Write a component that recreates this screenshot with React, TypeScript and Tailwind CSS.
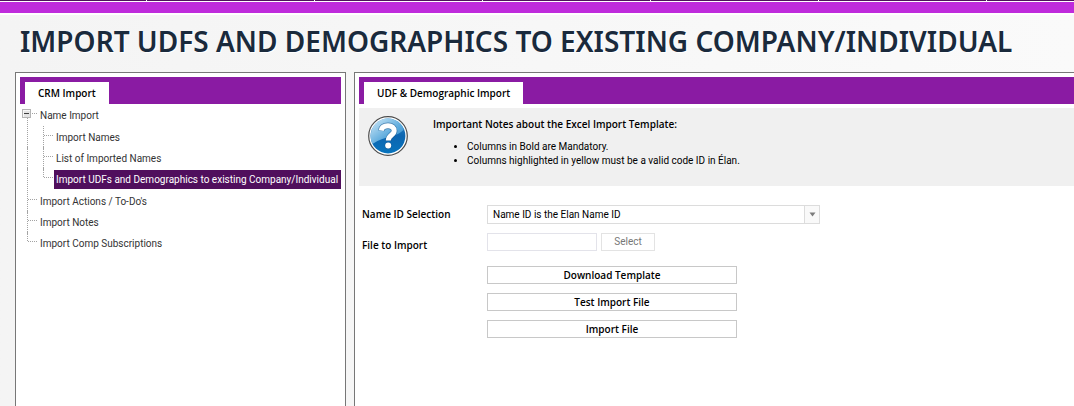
import { useState } from 'react';

type TreeItem = { label: string; depth: 0 | 1; last?: boolean; expander?: boolean };

const branches: TreeItem[][] = [
  [{ label: 'Name Import', depth: 0, expander: true }],
  [
    { label: 'Import Names', depth: 1 },
    { label: 'List of Imported Names', depth: 1 },
    { label: 'Import UDFs and Demographics to existing Company/Individual', depth: 1, last: true },
  ],
  [
    { label: "Import Actions / To-Do's", depth: 0 },
    { label: 'Import Notes', depth: 0 },
    { label: 'Import Comp Subscriptions', depth: 0, last: true },
  ],
];

function Connector({ item }: { item: TreeItem }) {
  const width = item.depth === 1 ? 32 : 16;
  const x = item.depth === 1 ? 21 : 5;
  return (
    <svg
      className="shrink-0 overflow-visible"
      width={width}
      height="21"
      viewBox={`0 0 ${width} 21`}
      fill="none"
      stroke="#a3a3a3"
      aria-hidden="true"
    >
      <g strokeDasharray="1 1">
        {item.depth === 1 && <path d="M5.5 -1V22" />}
        {item.expander ? (
          <path d="M5.5 13V22" />
        ) : (
          <path d={item.last ? `M${x}.5 -1V9` : `M${x}.5 -1V22`} />
        )}
        <path d={`M${x + 1} 8.5H${x + 10}`} />
      </g>
      {item.expander && (
        <g>
          <rect x="0.5" y="4.5" width="8" height="8" fill="#e4e4e4" stroke="#b4b4b4" />
          <path d="M1 5.5H8M1.5 5V12" stroke="#f8f8f8" />
          <path d="M2 8.5H7" stroke="#404040" />
        </g>
      )}
    </svg>
  );
}

function TabBar({ title }: { title: string }) {
  return (
    <div role="tablist" className="flex bg-[#8a1ba3] px-[5px] pt-[5px]">
      <button
        role="tab"
        aria-selected="true"
        type="button"
        className="h-[22px] bg-white px-[13px] font-['Open_Sans',sans-serif] text-[10px] leading-[22px] font-semibold text-black"
      >
        {title}
      </button>
    </div>
  );
}

function HelpIcon() {
  return (
    <svg className="shrink-0" width="40" height="40" viewBox="0 0 40 40" aria-hidden="true">
      <defs>
        <linearGradient id="ball" x1="0" y1="0" x2="0" y2="1">
          <stop offset="0" stopColor="#2a86c8" />
          <stop offset="0.5" stopColor="#0c65b0" />
          <stop offset="1" stopColor="#0874bd" />
        </linearGradient>
        <linearGradient id="shine" x1="0" y1="0" x2="1" y2="1">
          <stop offset="0" stopColor="#d4ebf8" />
          <stop offset="0.6" stopColor="#5aa9dc" />
          <stop offset="1" stopColor="#2984c6" />
        </linearGradient>
      </defs>
      <circle cx="20" cy="20" r="19.3" fill="#fff" stroke="#4c4c4c" strokeWidth="1.2" />
      <circle cx="20" cy="20" r="17.4" fill="url(#ball)" />
      <path d="M2.6 21.5A17.4 17.4 0 0 1 35.9 13C31 21 18 19 4.5 28A17.4 17.4 0 0 1 2.6 21.5Z" fill="url(#shine)" />
      <g fill="none" strokeLinecap="butt">
        <path d="M13.2 14.8C13.8 11 16.6 9.8 20 9.8C24 9.8 26.2 12 26.2 14.8C26.2 19.2 20.3 19 20.3 25" stroke="#17548a" strokeOpacity="0.6" strokeWidth="6.4" />
        <path d="M13.2 14.5C13.8 11 16.6 9.8 20 9.8C24 9.8 26.2 12 26.2 14.8C26.2 19.2 20.3 19 20.3 24.6" stroke="#fff" strokeWidth="5" />
      </g>
      <circle cx="20.2" cy="29.6" r="3.6" fill="#17548a" fillOpacity="0.6" />
      <circle cx="20.2" cy="29.6" r="3" fill="#fff" />
    </svg>
  );
}

export default function App() {
  const [selected, setSelected] = useState(
    'Import UDFs and Demographics to existing Company/Individual',
  );
  return (
    <div className="flex min-h-screen flex-col overflow-hidden bg-[#f6f6f6] bg-linear-to-r from-[#f4f4f4] to-[#fafafa] font-['Roboto',sans-serif] text-[10px] text-black">
      <header>
        <div className="flex h-px overflow-hidden bg-[#500f5d]">
          <div className="w-[147px] shrink-0 border-r border-white" />
          {[0, 1, 2, 3, 4].map((n) => (
            <div key={n} className="w-[168px] shrink-0 border-r border-white" />
          ))}
        </div>
        <div className="h-[14px] border-t border-b-2 border-white bg-[#bf2bdc]" />
      </header>

      <h1 className="px-5 pt-[6px] pb-[11px] font-['Noto_Sans',sans-serif] text-[28px] leading-10 font-semibold whitespace-nowrap text-[#1a2a3c] uppercase text-shadow-[1px_1px_0_#fff]">
        Import UDFs and Demographics to existing Company/Individual
      </h1>

      <main className="flex flex-1 pl-[15px]">
        <aside className="mr-2 w-[331px] shrink-0 border border-b-0 border-[#777] bg-white p-1">
          <TabBar title="CRM Import" />
          <nav className="flex flex-col gap-px pt-px pl-[2px]">
            {branches.map((items, index) => (
              <ul key={index}>
                {items.map((item) => (
                  <li key={item.label} className="flex h-[21px] items-center">
                    <Connector item={item} />
                    <a
                      href="#"
                      onClick={(event) => {
                        event.preventDefault();
                        setSelected(item.label);
                      }}
                      className={
                        item.label === selected
                          ? 'h-[19px] flex-1 bg-[#500f5d] pl-[2px] leading-[19px] whitespace-nowrap text-white'
                          : 'h-[19px] pl-[2px] leading-[19px] whitespace-nowrap text-[#333]'
                      }
                    >
                      {item.label}
                    </a>
                  </li>
                ))}
              </ul>
            ))}
          </nav>
        </aside>

        <section className="min-w-0 flex-1 border-t border-l border-[#777] bg-white pt-1 pl-1">
          <TabBar title="UDF &amp; Demographic Import" />
          <div className="mt-1 flex gap-[25px] bg-[#f0f0f0] px-[9px] pt-2 pb-[18px]">
            <HelpIcon />
            <div>
              <h2 className="font-['Open_Sans',sans-serif] leading-4 font-semibold">
                Important Notes about the Excel Import Template:
              </h2>
              <ul className="mt-2 list-disc pl-[34px] leading-[14px]">
                <li>Columns in Bold are Mandatory.</li>
                <li>Columns highlighted in yellow must be a valid code ID in Élan.</li>
              </ul>
            </div>
          </div>

          <form className="pt-[19px] pl-[3px]" onSubmit={(event) => event.preventDefault()}>
            <div className="flex items-center">
              <label
                htmlFor="name-id"
                className="w-[125px] shrink-0 font-['Open_Sans',sans-serif] font-semibold"
              >
                Name ID Selection
              </label>
              <div className="relative w-[333px]">
                <select
                  id="name-id"
                  className="block h-[19px] w-full appearance-none border border-[#dcdcdc] bg-white pl-[5px] text-[10px] leading-[17px]"
                >
                  <option>Name ID is the Elan Name ID</option>
                </select>
                <span className="pointer-events-none absolute inset-y-0 right-0 flex w-4 items-center justify-center border border-[#dcdcdc] bg-[#f9f9f9]">
                  <svg width="7" height="5" viewBox="0 0 7 5" aria-hidden="true">
                    <path d="M0.5 0.5H6.5L3.5 4.5Z" fill="#7c7c7c" />
                  </svg>
                </span>
              </div>
            </div>
            <div className="mt-[9px] flex items-start">
              <label
                htmlFor="file-name"
                className="w-[125px] shrink-0 pt-1 font-['Open_Sans',sans-serif] leading-4 font-semibold"
              >
                File to Import
              </label>
              <input
                id="file-name"
                type="text"
                className="mr-1 h-[18px] w-[110px] border border-[#e3e3ea] bg-white px-1"
              />
              <button
                type="button"
                className="h-[18px] w-[54px] border border-[#e3e3e3] bg-white leading-4 text-[#777]"
              >
                Select
              </button>
            </div>
            <div className="mt-[13px] ml-[125px] flex w-[250px] flex-col gap-[9px]">
              {['Download Template', 'Test Import File', 'Import File'].map((label) => (
                <button
                  key={label}
                  type="button"
                  className="h-[18px] border border-[#c8c8c8] bg-white font-['Open_Sans',sans-serif] leading-4 font-semibold"
                >
                  {label}
                </button>
              ))}
            </div>
          </form>
        </section>
      </main>
    </div>
  );
}
